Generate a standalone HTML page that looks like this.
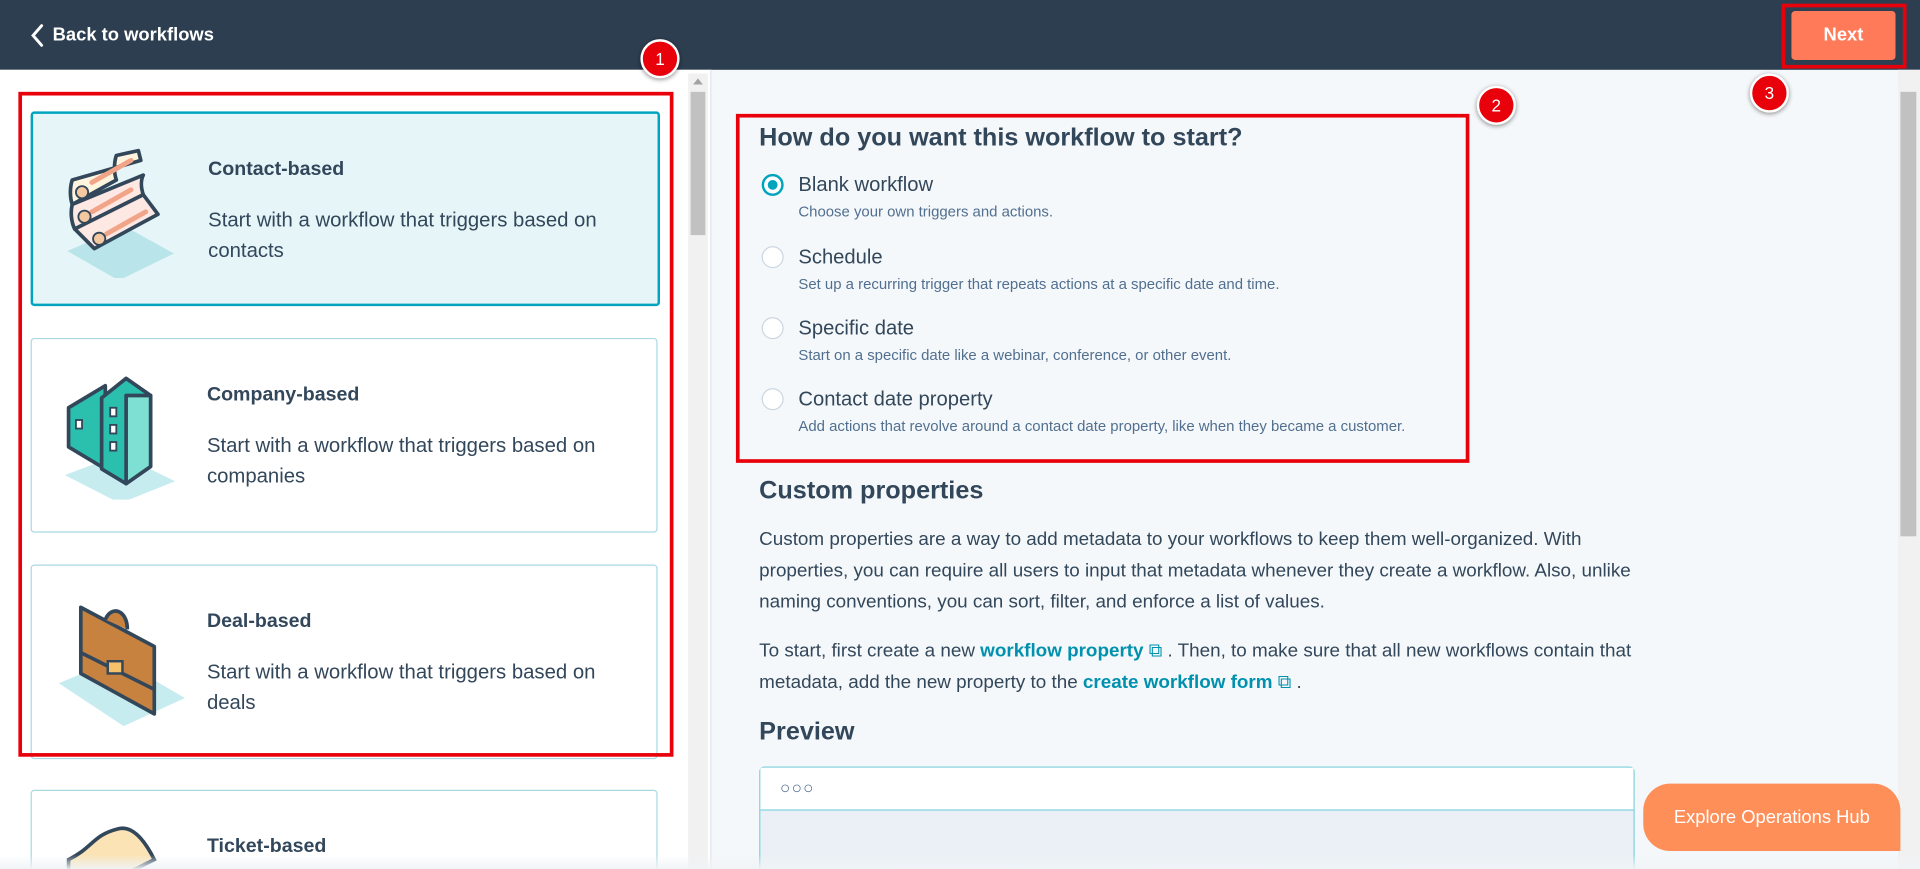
<!DOCTYPE html>
<html><head><meta charset="utf-8">
<style>
html,body{margin:0;padding:0;width:1920px;height:869px;overflow:hidden;background:#f5f8fa}
#w{position:absolute;left:0;top:0;width:1568px;height:710px;transform:scale(1.22449);transform-origin:0 0;font-family:"Liberation Sans",sans-serif;color:#33475b;overflow:hidden}
.a{position:absolute}
.hdr{left:0;top:0;width:1568px;height:57px;background:#2d3e50}
.card{position:absolute;left:25px;width:510px;height:157px;border:1px solid #a8d9e3;border-radius:3px;background:#fff}
.card h3{position:absolute;left:143px;top:37px;margin:0;font-size:16px;font-weight:bold;color:#33475b}
.card p{position:absolute;left:143px;top:74px;margin:0;font-size:16.6px;line-height:25px;color:#33475b;width:348px}
.badge{position:absolute;width:28px;height:28px;border-radius:50%;background:#e8000b;border:2px solid #fff;box-shadow:0 1px 4px rgba(0,0,0,.45);color:#fff;font-size:14px;text-align:center;line-height:28px}
.red{position:absolute;border:3px solid #e8000b;box-sizing:border-box}
.opt{position:absolute;left:620px}
.rad{position:absolute;left:2px;top:0;width:18px;height:18px;border:1.5px solid #cbd6e2;border-radius:50%;background:#fff;box-sizing:border-box}
.opt .t{position:absolute;left:32px;top:0px;font-size:16.5px;white-space:nowrap}
.opt .d{position:absolute;left:32px;top:24px;font-size:12.2px;color:#516f90;white-space:nowrap}
.para{position:absolute;left:620px;font-size:15.4px;line-height:25.5px;color:#33475b;width:720px}
.lk{color:#0091ae;font-weight:bold}
h2{margin:0;font-size:20.6px;font-weight:bold;color:#33475b;position:absolute;left:620px}
</style></head><body><div id="w">
<div class="a hdr"></div>
<svg class="a" style="left:24px;top:19px" width="14" height="20" viewBox="0 0 14 20"><path d="M10 2 L3 10 L10 18" stroke="#fff" stroke-width="2.4" fill="none" stroke-linecap="round"/></svg>
<div class="a" style="left:43px;top:20px;color:#fff;font-weight:bold;font-size:15px">Back to workflows</div>
<div class="a" style="left:1463px;top:9px;width:85px;height:40px;background:#ff7a59;border-radius:3px;color:#fff;font-weight:bold;font-size:15px;text-align:center;line-height:40px">Next</div>
<div class="red" style="left:1455px;top:3px;width:102px;height:53px"></div>

<div class="a" style="left:0;top:57px;width:580px;height:653px;background:#fff;border-right:1px solid #dfe3eb"></div>
<div class="a" style="left:562px;top:60px;width:16px;height:650px;background:#f1f1f1"></div>
<div class="a" style="left:564px;top:75px;width:12px;height:117px;background:#c1c1c1"></div>
<div class="a" style="left:566px;top:64px;width:0;height:0;border:4px solid transparent;border-bottom:5px solid #a3a3a3;border-top:0"></div>

<div class="card" style="top:91px;background:#e5f5f8;border:2px solid #00a4bd;height:155px;width:510px"><h3 style="top:37px">Contact-based</h3><p>Start with a workflow that triggers based on contacts</p>
<svg class="a" style="left:20px;top:24px" width="110" height="110" viewBox="0 0 110 110"><path d="M8 88 L50 112 L95 90 L55 68Z" fill="#b8e4ea"/><g stroke="#33475b" stroke-width="3" fill="#fdf0e0" stroke-linejoin="round"><path d="M12 30 C10 36 10 44 12 50 L48 30 C46 24 46 16 48 10 L66 6 L68 14 Z" fill="#fff4dd"/><path d="M12 50 C10 58 12 66 14 70 L70 42 C68 36 68 30 70 26 Z" fill="#fde8e3"/><path d="M14 70 L30 86 L82 58 L70 42 Z" fill="#fde8e3"/></g><g stroke="#f2a488" stroke-width="4" stroke-linecap="round"><path d="M28 32 L60 14"/><path d="M28 56 L60 38"/><path d="M40 74 L72 56"/></g><g fill="#f5c9a0" stroke="#33475b" stroke-width="1.5"><circle cx="20" cy="40" r="5"/><circle cx="22" cy="60" r="5"/><circle cx="34" cy="78" r="5"/></g></svg></div>
<div class="card" style="top:276px"><h3>Company-based</h3><p>Start with a workflow that triggers based on companies</p>
<svg class="a" style="left:22px;top:26px" width="100" height="105" viewBox="0 0 100 105"><path d="M5 85 L50 108 L95 90 L50 68Z" fill="#c6ecf0"/><g stroke="#33475b" stroke-width="3" stroke-linejoin="round"><path d="M8 30 L38 12 L38 80 L8 62Z" fill="#2bbfae"/><path d="M35 22 L55 6 L75 20 L75 78 L55 92 L35 80Z" fill="#2bbfae"/><path d="M55 20 L75 20 L75 78 L55 92Z" fill="#7de0d2"/></g><g fill="#fff" stroke="#33475b" stroke-width="1.5"><rect x="42" y="30" width="5" height="7"/><rect x="42" y="44" width="5" height="7"/><rect x="42" y="58" width="5" height="7"/><rect x="14" y="40" width="5" height="7"/></g></svg></div>
<div class="card" style="top:461px"><h3>Deal-based</h3><p>Start with a workflow that triggers based on deals</p>
<svg class="a" style="left:20px;top:26px" width="110" height="110" viewBox="0 0 110 110"><path d="M2 70 L55 105 L105 82 L50 50Z" fill="#c6ecf0"/><g stroke="#33475b" stroke-width="3" stroke-linejoin="round"><path d="M20 8 L80 40 L80 95 L20 62Z" fill="#c8823f"/><path d="M40 18 C45 6 58 10 58 26" fill="#c8823f"/><path d="M20 45 L80 75"/></g><rect x="42" y="52" width="12" height="10" fill="#f5c26b" stroke="#33475b" stroke-width="2"/></svg></div>
<div class="card" style="top:645px;height:80px"><h3>Ticket-based</h3>
<svg class="a" style="left:20px;top:26px" width="110" height="40" viewBox="0 0 110 40"><path d="M10 30 C30 20 30 10 50 5 C60 2 70 10 80 30 L60 40 L10 40Z" fill="#fbe3b6" stroke="#33475b" stroke-width="3"/></svg></div>
<div class="red" style="left:15px;top:75px;width:535px;height:543px"></div>
<div class="badge" style="left:523px;top:32px">1</div>

<div class="a" style="left:1550px;top:57px;width:18px;height:653px;background:#f1f1f1"></div>
<div class="a" style="left:1552px;top:75px;width:13px;height:363px;background:#c1c1c1"></div>
<h2 style="top:101px">How do you want this workflow to start?</h2>
<div class="opt" style="top:142px"><div class="rad" style="border:2px solid #00a4bd"><div style="position:absolute;left:3px;top:3px;width:8px;height:8px;border-radius:50%;background:#00a4bd"></div></div><div class="t">Blank workflow</div><div class="d">Choose your own triggers and actions.</div></div>
<div class="opt" style="top:201px"><div class="rad"></div><div class="t">Schedule</div><div class="d">Set up a recurring trigger that repeats actions at a specific date and time.</div></div>
<div class="opt" style="top:259px"><div class="rad"></div><div class="t">Specific date</div><div class="d">Start on a specific date like a webinar, conference, or other event.</div></div>
<div class="opt" style="top:317px"><div class="rad"></div><div class="t">Contact date property</div><div class="d">Add actions that revolve around a contact date property, like when they became a customer.</div></div>
<div class="red" style="left:601px;top:93px;width:599px;height:285px"></div>
<div class="badge" style="left:1206px;top:70px">2</div>
<div class="badge" style="left:1429px;top:60px">3</div>
<h2 style="top:389px">Custom properties</h2>
<div class="para" style="top:428px">Custom properties are a way to add metadata to your workflows to keep them well-organized. With properties, you can require all users to input that metadata whenever they create a workflow. Also, unlike naming conventions, you can sort, filter, and enforce a list of values.</div>
<div class="para" style="top:519px">To start, first create a new <span class="lk">workflow property</span> <span style="color:#0091ae">⧉</span> . Then, to make sure that all new workflows contain that metadata, add the new property to the <span class="lk">create workflow form</span> <span style="color:#0091ae">⧉</span> .</div>
<h2 style="top:586px">Preview</h2>
<div class="a" style="left:620px;top:626px;width:713px;height:100px;border:1px solid #7fd1de;border-radius:4px;background:#eaf0f6"><div style="height:34px;background:#fff;border-bottom:1px solid #7fd1de;position:relative"><span style="position:absolute;left:16px;top:8px;font-size:14px;color:#516f90;letter-spacing:1px">○○○</span></div></div>
<div class="a" style="left:1342px;top:640px;width:210px;height:55px;border-radius:22px 22px 0 22px;background:#ff8f59;color:#fff;font-size:15px;text-align:center;line-height:55px">Explore Operations Hub</div>
<div class="a" style="left:0;top:698px;width:1568px;height:12px;background:linear-gradient(rgba(255,255,255,0),rgba(240,244,247,.95))"></div>
</div></body></html>
